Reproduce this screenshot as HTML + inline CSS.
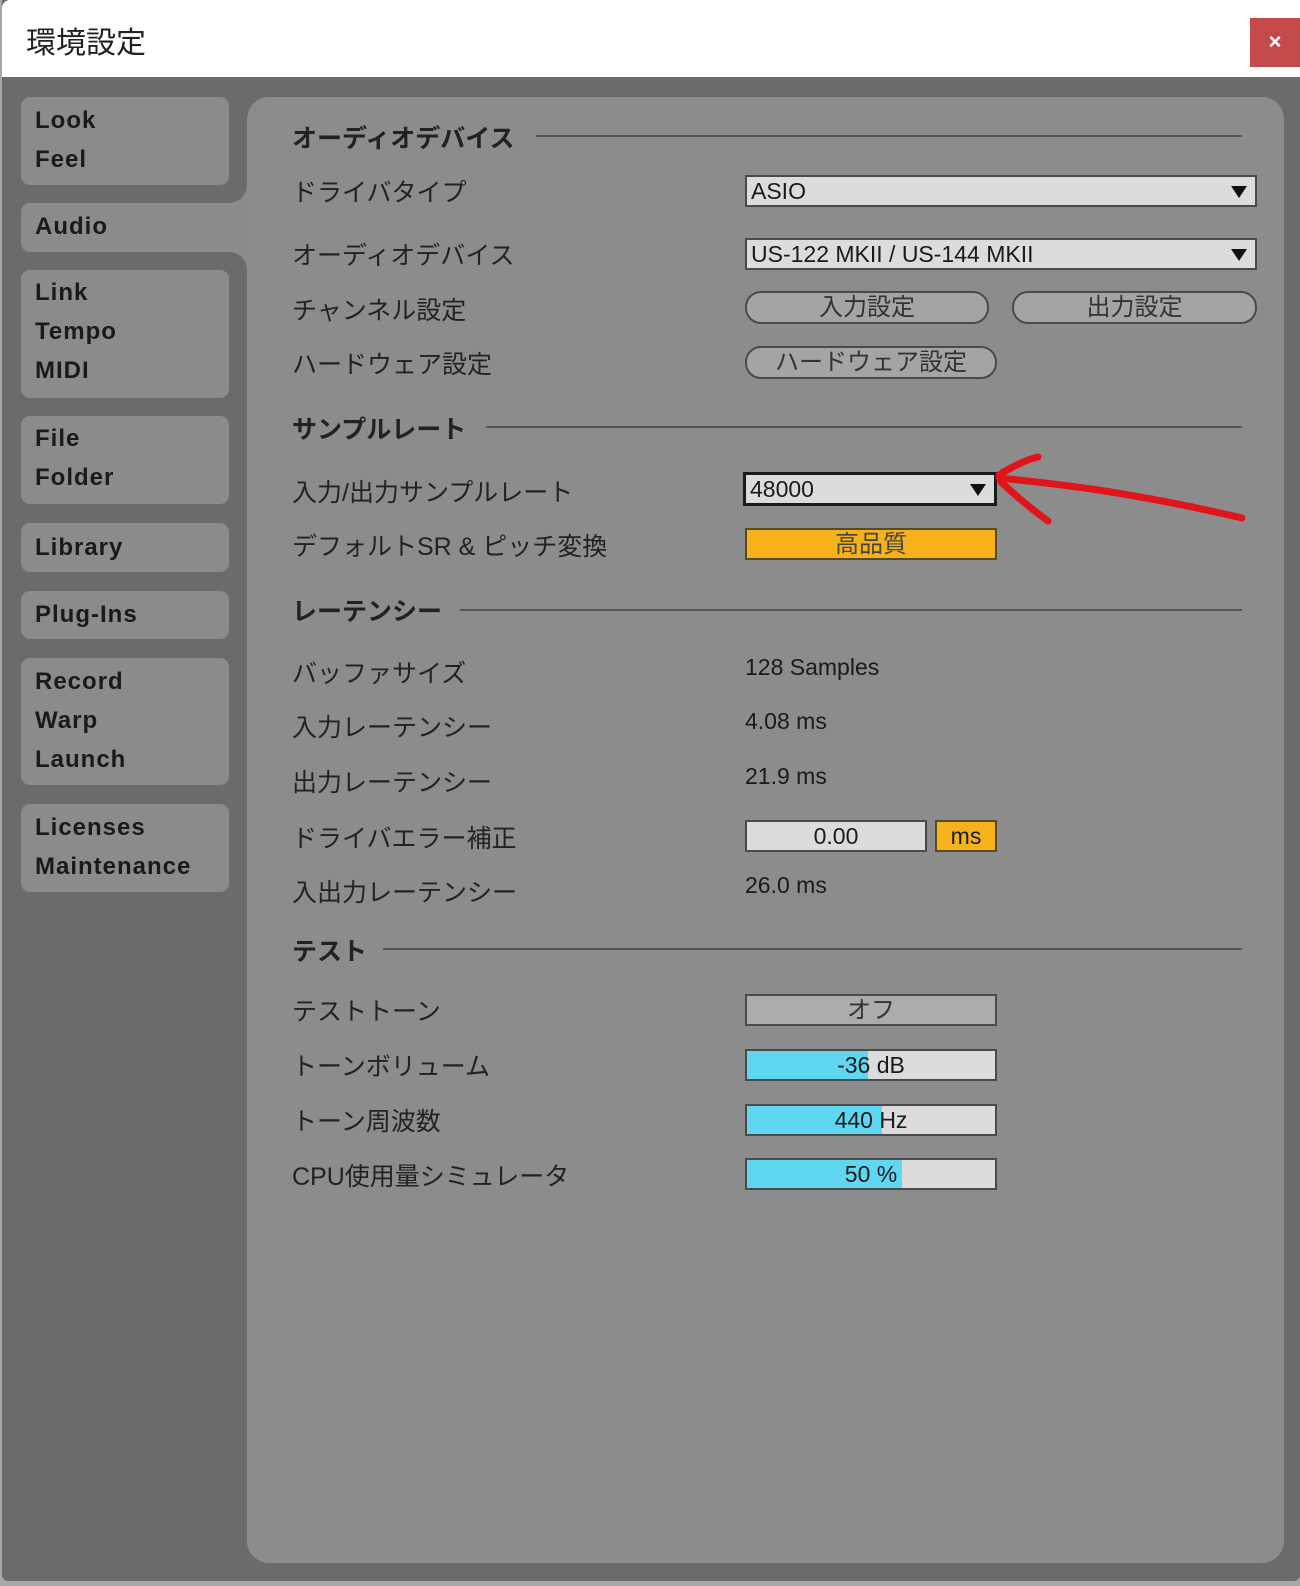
<!DOCTYPE html>
<html><head><meta charset="utf-8"><style>
*{margin:0;padding:0;box-sizing:border-box}
body{width:1300px;height:1586px;background:#a8a8a8;position:relative;overflow:hidden;font-family:"Liberation Sans","Noto Sans CJK JP",sans-serif;color:#1a1a1a}
.a{position:absolute}
#win{left:2px;top:0;width:1298px;height:1581px;background:#6b6b6b;border-radius:0 0 6px 6px}
#title{left:2px;top:0;width:1298px;height:77px;background:#fff;border-radius:8px 0 0 0}
#title span{position:absolute;left:24px;top:18px;font-size:30px;color:#222}
#close{left:1250px;top:18px;width:50px;height:49px;background:#c44a4a;color:#fff;font-weight:bold;font-size:22px;text-align:center;line-height:47px}
.tab{background:#8b8b8b;border-radius:9px;left:21px;width:208px;font-size:24px;letter-spacing:1px;font-weight:bold;padding-left:14px;line-height:39px}
#panel{left:247px;top:97px;width:1037px;height:1466px;background:#8c8c8c;border-radius:22px}
.l{font-size:25px;left:292px;color:#222;white-space:nowrap}
.h{font-weight:bold}
.ln{height:2px;background:#555}
.box{background:#dcdcdc;border:2px solid #4a4a4a;font-size:23px;line-height:28px;padding-left:4px;overflow:hidden}
.arr{position:absolute;right:8px;top:9px;width:0;height:0;border-left:8px solid transparent;border-right:8px solid transparent;border-top:12px solid #111}
.pill{border:2px solid #4a4a4a;border-radius:16px;background:#a4a4a4;text-align:center;font-size:24px;line-height:30px;color:#333}
.v{font-size:23px;left:745px}
.sl{background:#dcdcdc;border:2px solid #4a4a4a;text-align:center;font-size:23px;line-height:28px;overflow:hidden}
.sl i{position:absolute;left:0;top:0;bottom:0;background:#5fd7f0}
.sl b{position:relative;font-weight:normal}
</style></head><body>
<div class="a" id="win"></div>
<div class="a" id="title"><span>環境設定</span></div>
<div class="a" id="close">×</div>

<div class="a tab" style="top:97px;height:88px;padding-top:4px">Look<br>Feel</div>
<div class="a" style="left:21px;top:203px;width:240px;height:49px;background:#8b8b8b;border-radius:9px 0 0 9px"></div>
<div class="a" style="left:229px;top:185px;width:18px;height:18px;background:#8b8b8b"></div>
<div class="a" style="left:229px;top:185px;width:18px;height:18px;background:#6b6b6b;border-radius:0 0 18px 0"></div>
<div class="a" style="left:229px;top:252px;width:18px;height:18px;background:#8b8b8b"></div>
<div class="a" style="left:229px;top:252px;width:18px;height:18px;background:#6b6b6b;border-radius:0 18px 0 0"></div>
<div class="a" id="panel"></div>
<div class="a" style="left:35px;top:207px;font-size:24px;letter-spacing:1px;font-weight:bold;line-height:39px">Audio</div>
<div class="a tab" style="top:270px;height:128px;padding-top:3px">Link<br>Tempo<br>MIDI</div>
<div class="a tab" style="top:416px;height:88px;padding-top:3px">File<br>Folder</div>
<div class="a tab" style="top:523px;height:49px;line-height:49px">Library</div>
<div class="a tab" style="top:591px;height:48px;line-height:48px">Plug-Ins</div>
<div class="a tab" style="top:658px;height:127px;padding-top:4px">Record<br>Warp<br>Launch</div>
<div class="a tab" style="top:804px;height:88px;padding-top:4px">Licenses<br>Maintenance</div>

<div class="a l h" style="top:119px">オーディオデバイス</div><div class="a ln" style="left:536px;top:135px;width:706px"></div>
<div class="a l" style="top:173px">ドライバタイプ</div>
<div class="a box" style="left:745px;top:175px;width:512px;height:32px">ASIO<div class="arr"></div></div>
<div class="a l" style="top:236px">オーディオデバイス</div>
<div class="a box" style="left:745px;top:238px;width:512px;height:32px">US-122 MKII / US-144 MKII<div class="arr"></div></div>
<div class="a l" style="top:291px">チャンネル設定</div>
<div class="a pill" style="left:745px;top:291px;width:244px;height:33px">入力設定</div>
<div class="a pill" style="left:1012px;top:291px;width:245px;height:33px">出力設定</div>
<div class="a l" style="top:345px">ハードウェア設定</div>
<div class="a pill" style="left:745px;top:346px;width:252px;height:33px">ハードウェア設定</div>

<div class="a l h" style="top:410px">サンプルレート</div><div class="a ln" style="left:486px;top:426px;width:756px"></div>
<div class="a l" style="top:473px">入力/出力サンプルレート</div>
<div class="a box" style="left:743px;top:472px;width:254px;height:34px;border:3px solid #1a1a1a">48000<div class="arr"></div></div>
<div class="a l" style="top:527px">デフォルトSR &amp; ピッチ変換</div>
<div class="a" style="left:745px;top:528px;width:252px;height:32px;background:#f5b21c;border:2px solid #5a4a20;text-align:center;font-size:24px;line-height:30px;color:#444">高品質</div>

<div class="a l h" style="top:592px">レーテンシー</div><div class="a ln" style="left:460px;top:609px;width:782px"></div>
<div class="a l" style="top:654px">バッファサイズ</div><div class="a v" style="top:654px">128 Samples</div>
<div class="a l" style="top:708px">入力レーテンシー</div><div class="a v" style="top:708px">4.08 ms</div>
<div class="a l" style="top:763px">出力レーテンシー</div><div class="a v" style="top:763px">21.9 ms</div>
<div class="a l" style="top:819px">ドライバエラー補正</div>
<div class="a sl" style="left:745px;top:820px;width:182px;height:32px">0.00</div>
<div class="a" style="left:935px;top:820px;width:62px;height:32px;background:#f5b21c;border:2px solid #5a4a20;text-align:center;font-size:23px;line-height:28px">ms</div>
<div class="a l" style="top:873px">入出力レーテンシー</div><div class="a v" style="top:872px">26.0 ms</div>

<div class="a l h" style="top:932px">テスト</div><div class="a ln" style="left:383px;top:948px;width:859px"></div>
<div class="a l" style="top:992px">テストトーン</div>
<div class="a" style="left:745px;top:994px;width:252px;height:32px;background:#acacac;border:2px solid #4a4a4a;text-align:center;font-size:24px;line-height:30px;color:#333">オフ</div>
<div class="a l" style="top:1047px">トーンボリューム</div>
<div class="a sl" style="left:745px;top:1049px;width:252px;height:32px"><i style="width:121px"></i><b>-36 dB</b></div>
<div class="a l" style="top:1102px">トーン周波数</div>
<div class="a sl" style="left:745px;top:1104px;width:252px;height:32px"><i style="width:135px"></i><b>440 Hz</b></div>
<div class="a l" style="top:1157px">CPU使用量シミュレータ</div>
<div class="a sl" style="left:745px;top:1158px;width:252px;height:32px"><i style="width:155px"></i><b>50 %</b></div>

<svg class="a" style="left:0;top:0" width="1300" height="1586" viewBox="0 0 1300 1586">
<g fill="none" stroke="#e0151c" stroke-width="7" stroke-linecap="round">
<path d="M999 478 C1060 484 1130 492 1242 518"/>
<path d="M999 475 C1010 468 1025 460 1038 457"/>
<path d="M1001 482 C1015 495 1030 508 1048 521"/>
</g></svg>
</body></html>
